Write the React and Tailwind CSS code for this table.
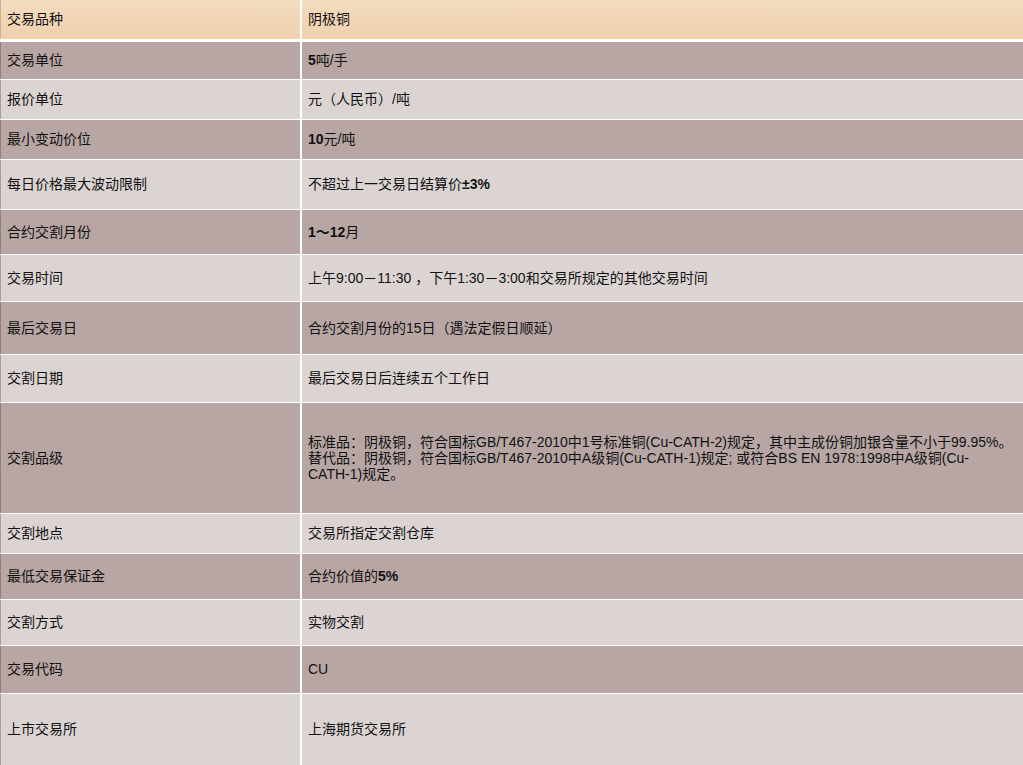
import React from 'react';

const B = ({ children }) => <span className="font-bold">{children}</span>;

const rows = [
  { label: '交易品种', value: '阴极铜', h: 'h-[39px]', tone: 'peach' },
  { label: '交易单位', value: <><B>5</B>吨/手</>, h: 'h-[37px]', tone: 'dark' },
  { label: '报价单位', value: '元（人民币）/吨', h: 'h-[39px]', tone: 'light' },
  { label: '最小变动价位', value: <><B>10</B>元/吨</>, h: 'h-[39px]', tone: 'dark' },
  { label: '每日价格最大波动限制', value: <>不超过上一交易日结算价<B>±3%</B></>, h: 'h-[49px]', tone: 'light' },
  { label: '合约交割月份', value: <><B>1～12</B>月</>, h: 'h-[44px]', tone: 'dark' },
  { label: '交易时间', value: '上午9:00－11:30 ，下午1:30－3:00和交易所规定的其他交易时间', h: 'h-[46px]', tone: 'light' },
  { label: '最后交易日', value: '合约交割月份的15日（遇法定假日顺延）', h: 'h-[52px]', tone: 'dark' },
  { label: '交割日期', value: '最后交易日后连续五个工作日', h: 'h-[47px]', tone: 'light' },
  {
    label: '交割品级',
    value: (
      <div className="leading-[16px] whitespace-nowrap">
        <div>标准品：阴极铜，符合国标GB/T467-2010中1号标准铜(Cu-CATH-2)规定，其中主成份铜加银含量不小于99.95%。</div>
        <div>替代品：阴极铜，符合国标GB/T467-2010中A级铜(Cu-CATH-1)规定; 或符合BS EN 1978:1998中A级铜(Cu-</div>
        <div>CATH-1)规定。</div>
      </div>
    ),
    h: 'h-[110px]',
    tone: 'dark',
  },
  { label: '交割地点', value: '交易所指定交割仓库', h: 'h-[39px]', tone: 'light' },
  { label: '最低交易保证金', value: <>合约价值的<B>5%</B></>, h: 'h-[45px]', tone: 'dark' },
  { label: '交割方式', value: '实物交割', h: 'h-[45px]', tone: 'light' },
  { label: '交易代码', value: 'CU', h: 'h-[47px]', tone: 'dark' },
  { label: '上市交易所', value: '上海期货交易所', h: 'h-[71px]', tone: 'light' },
];

const toneClass = {
  peach: 'bg-gradient-to-b from-[#f4dcc0] to-[#efd0ad] border-l-[#c9b196]',
  dark: 'bg-[#b7a6a3] border-l-[#8d7f7c]',
  light: 'bg-[#dcd4d3] border-l-[#a79d9b]',
};

export default function App() {
  return (
    <div className="w-[1023px] h-[765px] overflow-hidden bg-white text-[14px] text-[#111111] font-['Liberation_Sans','Noto_Sans_CJK_SC',sans-serif]">
      {rows.map((r, i) => (
        <div
          key={r.label}
          className={`flex ${r.h} border-l ${toneClass[r.tone]} ${i === 0 ? 'mb-[3px]' : 'mb-px'}`}
        >
          <div className="w-[301px] shrink-0 flex items-center pl-[6px] border-r-2 border-white">
            {r.label}
          </div>
          <div className="flex-1 flex items-center pl-[6px] min-w-0">
            {r.value}
          </div>
        </div>
      ))}
    </div>
  );
}
